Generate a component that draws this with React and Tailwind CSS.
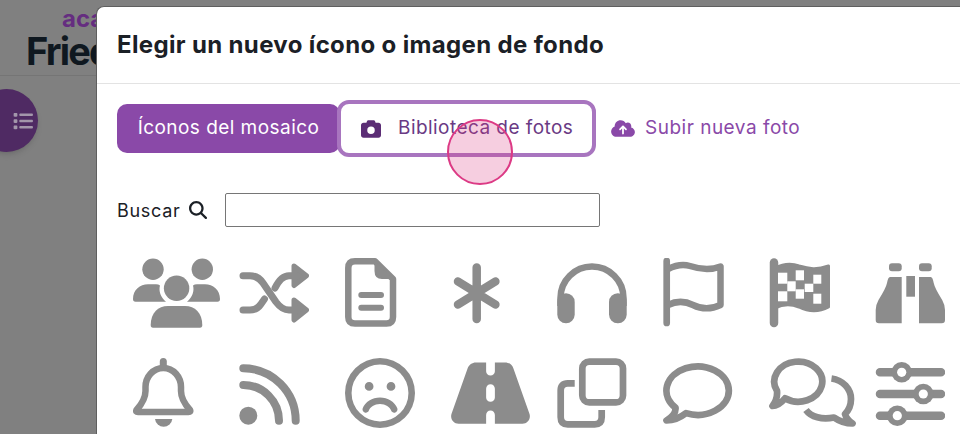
import React from "react";
import {
  FaRegFaceFrown, FaRoad,
  FaCamera, FaCloudArrowUp, FaMagnifyingGlass, FaList,
} from "react-icons/fa6";

const Svg = ({ w, children }) => (
  <svg width={w} height="70" viewBox={`0 0 ${w} 70`} fill="currentColor" className="block">
    {children}
  </svg>
);
const Line = (p) => <path fill="none" stroke="currentColor" strokeLinecap="round" strokeLinejoin="round" {...p} />;

const Users = () => (
  <Svg w={88}>
    <circle cx="20" cy="11.3" r="10.7" />
    <circle cx="69.3" cy="11.3" r="10.7" />
    <circle cx="43.6" cy="30.3" r="12.7" />
    <path d="M2.5 43.7Q0 43.7 0 41C0 32 7 26.3 15 26.3H23Q25.5 26.3 27 27.5C25.5 33 27.5 39 33 43.7Z" />
    <path d="M84.5 43.7Q87 43.7 87 41C87 32 80 26.3 72 26.3H64Q61.5 26.3 60 27.5C61.5 33 59.5 39 54 43.7Z" />
    <path d="M20 69.7Q17.7 69.7 17.7 67C17.7 55 25 48 35 48H52C62 48 69.3 55 69.3 67Q69.3 69.7 67 69.7Z" />
  </Svg>
);
const Shuffle = () => (
  <Svg w={70}>
    <Line strokeWidth="7" d="M4 17.7H11Q19 17.7 24 25L37 44Q43 52 50 52H58" />
    <Line strokeWidth="7" d="M4 52H11Q18 52 22 46L25.5 41" />
    <Line strokeWidth="7" d="M36 30Q42 17.7 50 17.7H58" />
    <path stroke="currentColor" strokeWidth="5" strokeLinejoin="round" d="M55 8L67.5 17.7L55 27.5Z" />
    <path stroke="currentColor" strokeWidth="5" strokeLinejoin="round" d="M55 42L67.5 52L55 62Z" />
  </Svg>
);
const FileLines = () => (
  <Svg w={52}>
    <Line strokeWidth="6.5" d="M10 3.3H30L48 21V59Q48 65.5 41.5 65.5H10Q3.3 65.5 3.3 59V10Q3.3 3.3 10 3.3Z" />
    <path stroke="currentColor" strokeWidth="2" strokeLinejoin="round" d="M30.5 3V13Q30.5 20 37 20H49Z" />
    <Line strokeWidth="6" d="M16.3 37H36M16.3 49.7H36" />
  </Svg>
);
const Asterisk = () => (
  <Svg w={53}>
    <Line strokeWidth="8.5" d="M25.7 9.6V61M7 23.5L44.4 46.5M44.4 23.5L7 46.5" />
  </Svg>
);
const Headphones = () => (
  <Svg w={70}>
    <Line strokeWidth="6.5" strokeLinecap="butt" d="M3.5 48V40A31.5 31.5 0 0 1 66.5 40V48" />
    <rect x="0.3" y="35.3" width="17.4" height="30" rx="8.7" />
    <rect x="52" y="35.3" width="17.7" height="30" rx="8.7" />
  </Svg>
);
const Flag = () => (
  <Svg w={61}>
    <Line strokeWidth="6.7" d="M3.7 3V65" />
    <Line strokeWidth="6.5" d="M5 11C13 7 20 6 27 8C36 11 46 13 57.5 8.5V47C47 52 38 51 30 47C22 43 13 43 5 47" />
  </Svg>
);
const Checkered = () => (
  <Svg w={62}>
    <Line strokeWidth="8.5" d="M5 4.5V65" />
    <path stroke="currentColor" strokeWidth="3" strokeLinejoin="round" d="M6 10C14 6 22 5 30 8C40 11 48 12 59.5 8V49C50 54 40 54 30 49C22 46 14 46 6 50Z" />
    <g fill="#fff">
      <rect x="9" y="14.7" width="9.3" height="11" />
      <rect x="26.7" y="12.3" width="8.3" height="10" />
      <rect x="44.3" y="16.7" width="8" height="9" />
      <rect x="18.3" y="23.3" width="8.4" height="10" />
      <rect x="35.7" y="25.7" width="8.6" height="8.3" />
      <rect x="9" y="33.3" width="9.3" height="10" />
      <rect x="26.7" y="31.3" width="8.3" height="9.4" />
      <rect x="44.3" y="35.7" width="8" height="10" />
    </g>
  </Svg>
);
const Binoculars = () => (
  <Svg w={70}>
    <rect x="14" y="5.3" width="12.7" height="8" rx="3" />
    <rect x="44" y="5.3" width="12.7" height="8" rx="3" />
    <rect x="31.3" y="18" width="8.7" height="20.7" />
    <path d="M15 19H26.7V65.3H4Q0.7 65.3 0.7 62V52Q0.7 47 3.5 42Q11 30 12 25Q13 19 15 19Z" />
    <path d="M55.7 19H44V65.3H66.7Q70 65.3 70 62V52Q70 47 67.2 42Q59.7 30 58.7 25Q57.7 19 55.7 19Z" />
  </Svg>
);
const Bell = () => (
  <Svg w={61}>
    <Line strokeWidth="7" d="M30.3 3.5V9" />
    <Line strokeWidth="6.5" d="M30.3 10C20 10 12.5 19 12.5 29V33C12.5 40 8 47 3.5 52Q2.5 54 5 54H55.5Q58 54 57 52C52.5 47 48 40 48 33V29C48 19 40.5 10 30.3 10Z" />
    <path d="M22 61H39.3A8.7 8.7 0 0 1 22 61Z" />
  </Svg>
);
const Rss = () => (
  <Svg w={70}>
    <circle cx="9.3" cy="57.7" r="9" />
    <Line strokeWidth="8" d="M4.3 27A35.7 35.7 0 0 1 40 62.7" />
    <Line strokeWidth="8" d="M4.3 10.3A52.4 52.4 0 0 1 56.7 62.7" />
  </Svg>
);
const Copy = () => (
  <Svg w={70}>
    <rect x="25.3" y="3.6" width="40.7" height="40.8" rx="7" fill="none" stroke="currentColor" strokeWidth="6.7" />
    <Line strokeWidth="6.7" strokeLinecap="butt" d="M17.7 25.3H10.7Q3.7 25.3 3.7 32.3V59.3Q3.7 66.3 10.7 66.3H37.7Q44.7 66.3 44.7 59.3V52" />
  </Svg>
);
const Comment = () => (
  <Svg w={70}>
    <Line strokeWidth="6.7" d="M23 55.1A31.2 24.2 0 1 0 12.5 49.7C13 54 9 59 3.5 62.5C11 62.5 18 59 23 55.1Z" />
  </Svg>
);
const Comments = () => (
  <Svg w={88}>
    <Line strokeWidth="6.7" d="M16 40.3A24 20 0 1 0 8 32.9C8.5 38 6.5 44 3.5 48C8 48 12 45 16 40.3Z" />
    <Line strokeWidth="6.7" strokeLinecap="butt" d="M62.5 20.5C74 22 82 31 82 41C82 47 80 52 76 56C77 60 80 63 83.5 65.5C77 65.5 70 63 65 59.5C53 62 42 59 37 52" />
  </Svg>
);
const Sliders = () => (
  <Svg w={70}>
    <Line strokeWidth="8.5" d="M5 14.3H66M5 36H66M5 57.7H66" />
    {[[26.7, 14.3], [48.3, 36], [22.3, 57.7]].map(([x, y]) => (
      <g key={x}>
        <circle cx={x} cy={y} r="10.3" />
        <circle cx={x} cy={y} r="4.6" fill="#fff" />
      </g>
    ))}
  </Svg>
);
const Frown = () => <FaRegFaceFrown className="block" size={70} />;
const Road = () => <FaRoad className="block" style={{ width: 79, height: 70 }} />;

const icons = [
  Users, Shuffle, FileLines, Asterisk, Headphones, Flag, Checkered, Binoculars,
  Bell, Rss, Frown, Road, Copy, Comment, Comments, Sliders,
];

export default function App() {
  return (
    <div className="relative h-[434px] w-[960px] overflow-hidden bg-[#808080] font-['Inter','Liberation_Sans',sans-serif]">
      <header className="h-[76px] border-b border-[#757575] pl-[26px] pt-[6px]">
        <div className="ml-[36px] text-[24px] leading-[26px] font-bold text-[#652d80]">acade</div>
        <div className="text-[38px] leading-[38px] font-bold tracking-[-1.8px] text-[#0f1820]">Friedman</div>
      </header>
      <div className="mt-[13px] ml-[-25px] flex h-[63px] w-[63px] items-center justify-end rounded-full bg-[#4f2a63] pr-[5px] shadow-md">
        <FaList className="text-[20px] text-[#a396ab]" />
      </div>

      <div className="absolute top-[6px] left-[96px] h-[500px] w-[960px] rounded-tl-[8px] border-l border-t border-[#5f5f5f] bg-white">
        <div className="flex h-[77px] items-center border-b border-[#e3e3e3] pl-[20px]">
          <h1 className="text-[24px] leading-none font-bold tracking-[0.35px] text-[#1b2026]">Elegir un nuevo ícono o imagen de fondo</h1>
        </div>

        <div className="mt-[20px] ml-[20px] flex h-[49px] items-center text-[19px] tracking-[0.45px]">
          <div className="flex h-[49px] w-[223px] items-center justify-center rounded-[10px] bg-[#8a49a8] text-white">Íconos del mosaico</div>
          <div className="ml-[-3px] flex h-[57px] w-[259px] items-center rounded-[12px] border-[4px] border-[#a875bf] bg-white pl-[20px] text-[#6a3a84]">
            <FaCamera className="text-[20px] text-[#5b2d75]" />
            <span className="ml-[17px]">Biblioteca de fotos</span>
          </div>
          <div className="ml-[15px] flex items-center text-[#8a49a8]">
            <FaCloudArrowUp style={{ width: 24, height: 19 }} />
            <span className="ml-[10px] tracking-[0.5px]">Subir nueva foto</span>
          </div>
        </div>

        <div className="mt-[40px] ml-[20px] flex h-[34px] items-center text-[#1b2026]">
          <span className="w-[72px] text-[18px] tracking-[0.7px]">Buscar</span>
          <FaMagnifyingGlass className="text-[18px]" />
          <div className="ml-[18px] h-[34px] w-[375px] rounded-[2px] border border-[#767676] bg-white" />
        </div>

        <div className="mt-[31px] ml-[36px] grid grid-cols-[repeat(8,106px)] gap-y-[30px] text-[#8c8c8c]">
          {icons.map((Icon, i) => (
            <div key={i} className="h-[70px]">
              <Icon />
            </div>
          ))}
        </div>
      </div>

      <div className="absolute top-[119px] left-[447px] h-[66px] w-[66px] rounded-full border-2 border-[#dc3a85] bg-[#dc3a85]/25" />
    </div>
  );
}
